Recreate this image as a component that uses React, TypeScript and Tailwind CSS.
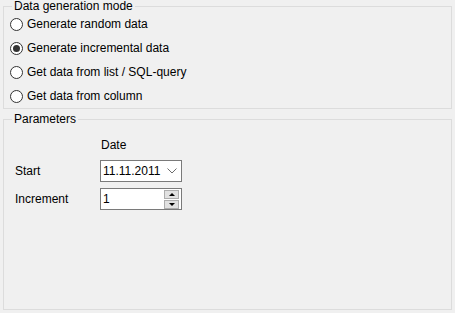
const modes = [
  "Generate random data",
  "Generate incremental data",
  "Get data from list / SQL-query",
  "Get data from column",
];

function Radio({ label, checked }: { label: string; checked?: boolean }) {
  return (
    <div className="flex items-center h-[24px]">
      <span className="flex items-center justify-center w-[13px] h-[13px] rounded-full border border-[#333333] bg-white">
        {checked && <span className="w-[7px] h-[7px] rounded-full bg-[#333333]" />}
      </span>
      <span className="ml-[4px]">{label}</span>
    </div>
  );
}

function SpinButton({ up }: { up?: boolean }) {
  return (
    <span className="flex items-center justify-center w-[15px] h-[9px] bg-[#e1e1e1] border border-[#adadad]">
      {up ? (
        <span className="w-0 h-0 border-x-[3px] border-x-transparent border-b-[3px] border-b-black" />
      ) : (
        <span className="w-0 h-0 border-x-[3px] border-x-transparent border-t-[3px] border-t-black" />
      )}
    </span>
  );
}

export default function App() {
  return (
    <div
      className="w-[455px] h-[313px] bg-[#f0f0f0] px-[3px] text-[12px] leading-[15px] text-black"
      style={{ fontFamily: '"Liberation Sans", Arial, sans-serif' }}
    >
      <fieldset className="border border-[#dcdcdc] h-[109px] px-[6px]">
        <legend className="ml-[2px] px-[2px] leading-[12px]">Data generation mode</legend>
        <div className="flex flex-col">
          {modes.map((m, i) => (
            <Radio key={m} label={m} checked={i === 1} />
          ))}
        </div>
      </fieldset>

      <fieldset className="border border-[#dcdcdc] h-[197px] mt-[4px] px-[6px]">
        <legend className="ml-[2px] px-[2px] leading-[12px]">Parameters</legend>
        <div className="grid grid-cols-[85px_82px] items-center mt-[10px] pl-[5px]">
          <span />
          <span className="flex items-center pl-[1px] h-[20px]">Date</span>

          <span className="mt-[5px]">Start</span>
          <div className="flex items-center justify-between h-[22px] mt-[5px] border border-[#7a7a7a] bg-white pl-[2px] pr-[4px]">
            <span>11.11.2011</span>
            <svg width="10" height="6" viewBox="0 0 10 6" fill="none">
              <polyline points="0.5,0.5 5,5 9.5,0.5" stroke="#6d6d6d" strokeWidth="1" />
            </svg>
          </div>

          <span className="mt-[6px]">Increment</span>
          <div className="flex items-center justify-between h-[22px] mt-[6px] border border-[#7a7a7a] bg-white pl-[2px] pr-[2px]">
            <span>1</span>
            <div className="flex flex-col gap-[1px]">
              <SpinButton up />
              <SpinButton />
            </div>
          </div>
        </div>
      </fieldset>
    </div>
  );
}
